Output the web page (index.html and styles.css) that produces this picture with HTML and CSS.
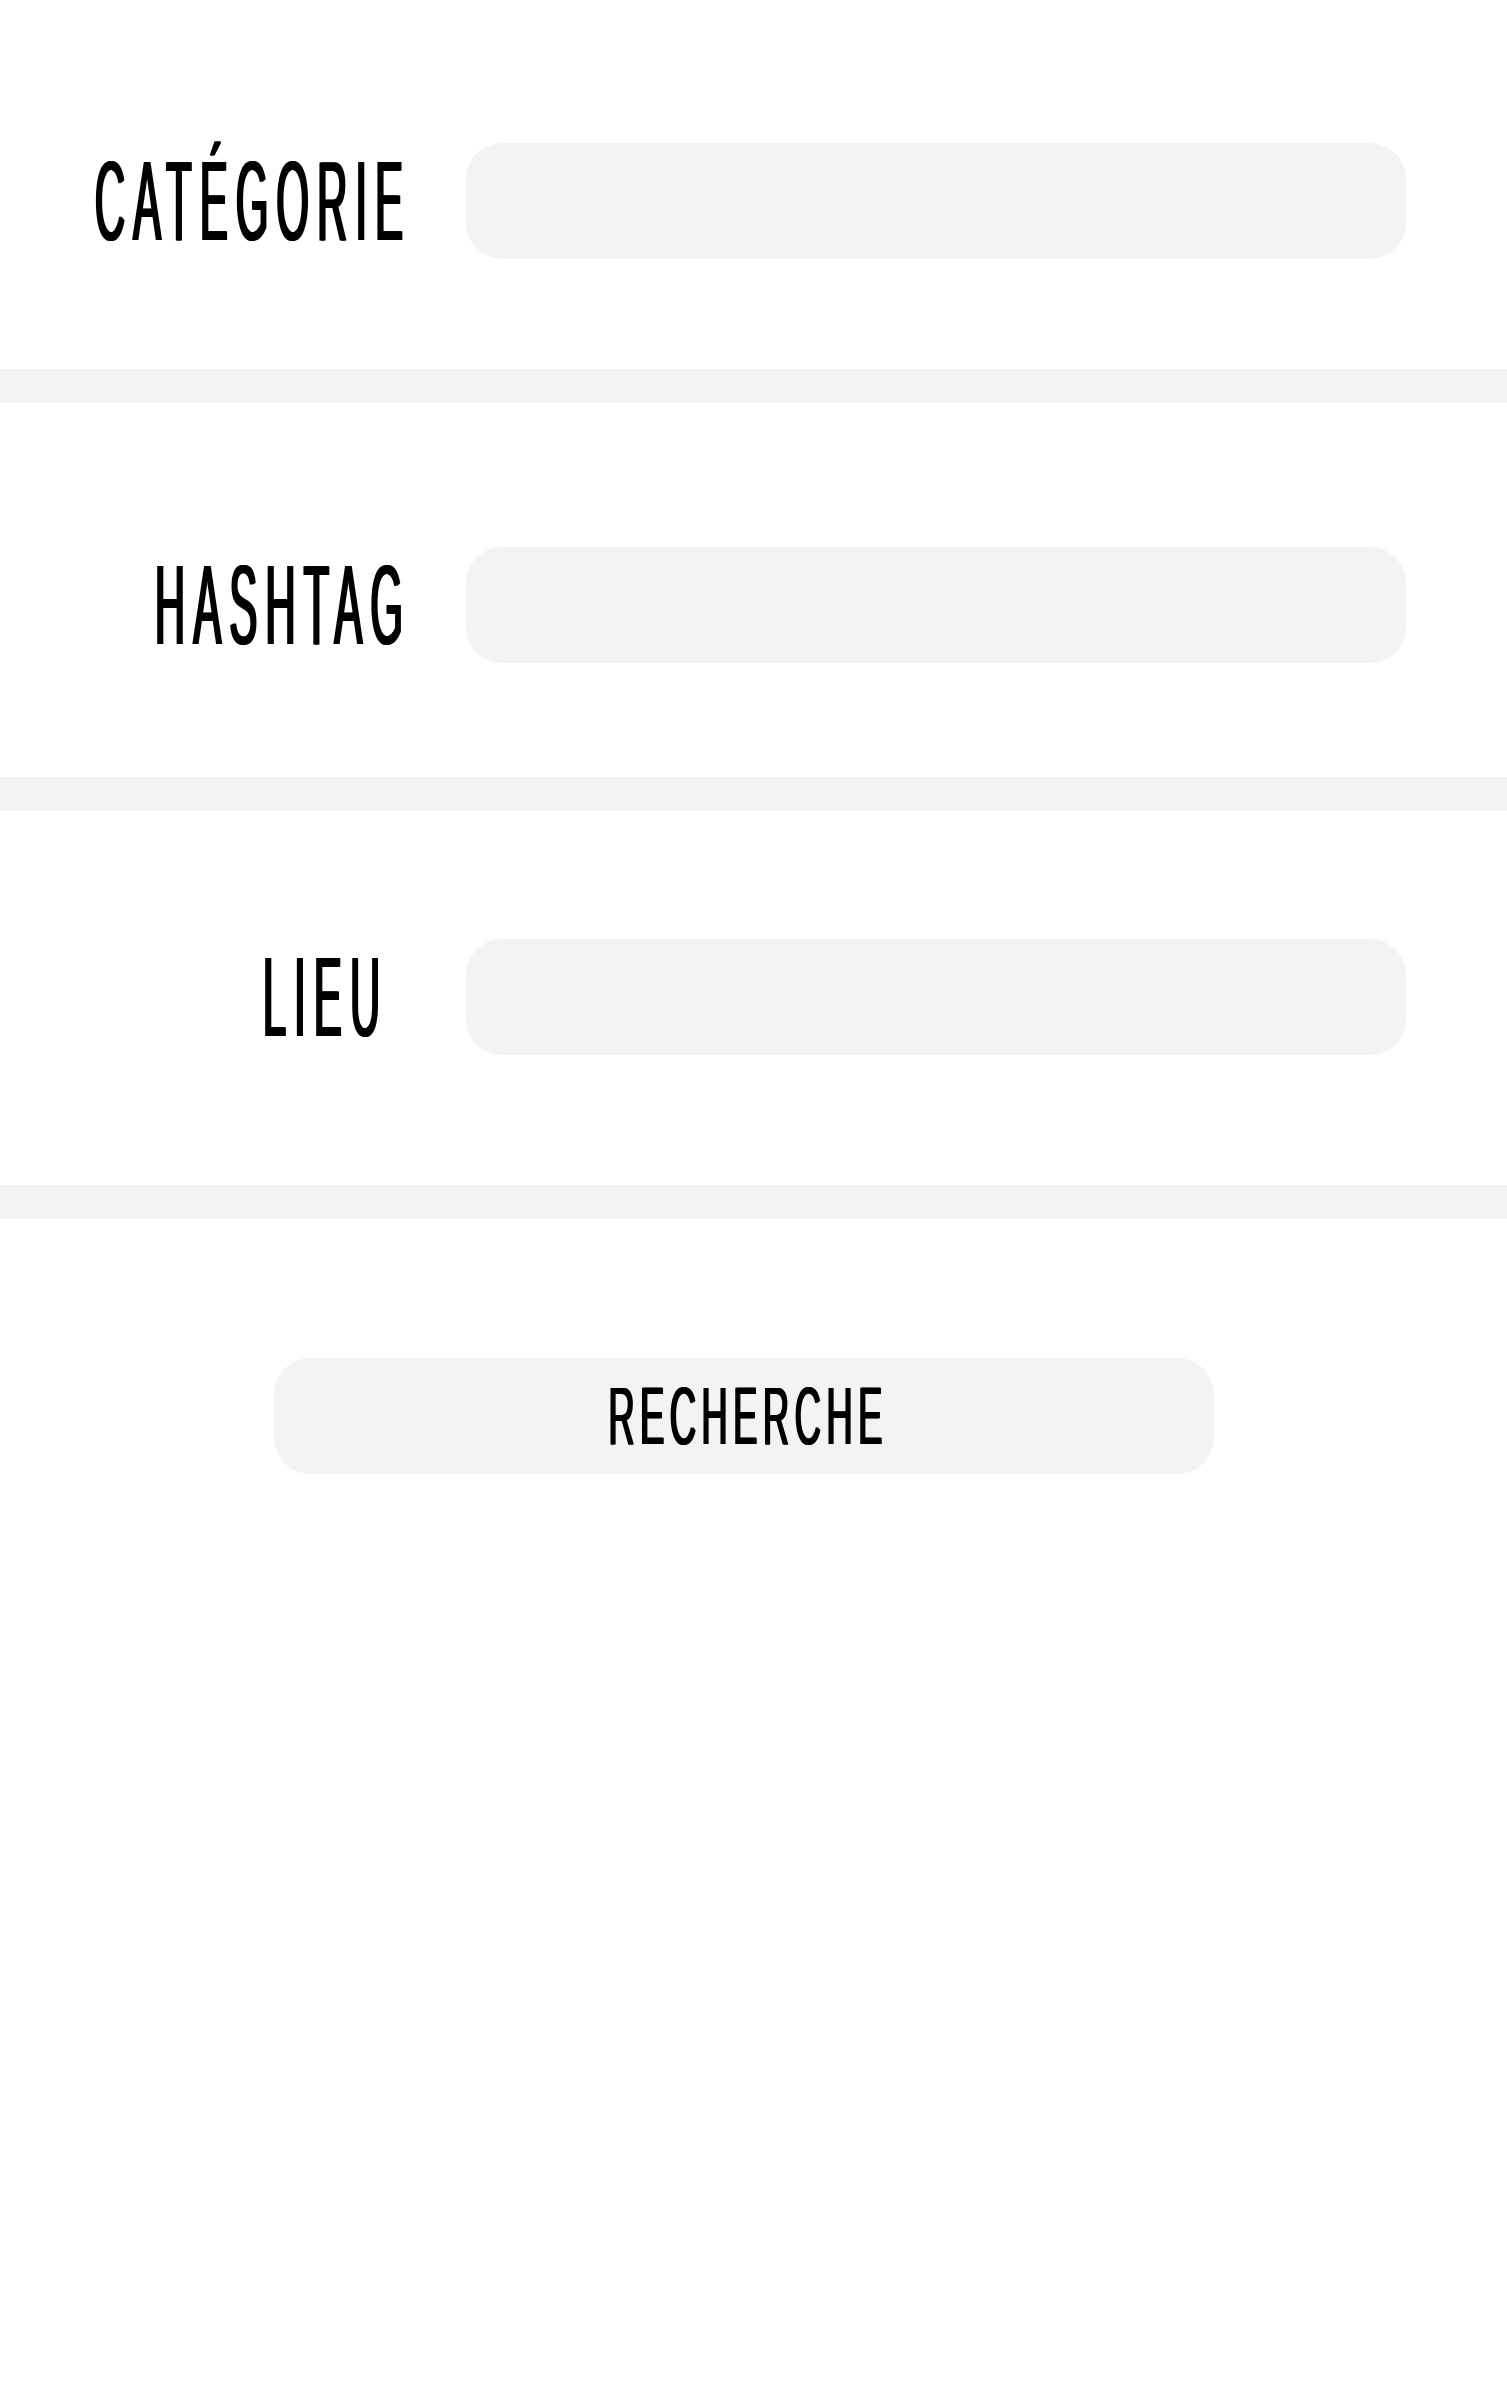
FILE: index.html
```html
<!DOCTYPE html>
<html lang="fr">
<head>
<meta charset="utf-8">
<title>Recherche</title>
<link rel="stylesheet" href="styles.css">
</head>
<body>
<main class="page">
  <section class="field field--first">
    <label class="label" for="categorie"><span class="label-text">CATÉGORIE</span></label>
    <input class="input" id="categorie" type="text">
  </section>
  <div class="divider"></div>
  <section class="field field--second">
    <label class="label" for="hashtag"><span class="label-text">HASHTAG</span></label>
    <input class="input" id="hashtag" type="text">
  </section>
  <div class="divider"></div>
  <section class="field field--third">
    <label class="label label--short" for="lieu"><span class="label-text">LIEU</span></label>
    <input class="input" id="lieu" type="text">
  </section>
  <div class="divider"></div>
  <div class="actions">
    <button class="search-btn" type="button"><span class="btn-text">RECHERCHE</span></button>
  </div>
</main>
</body>
</html>
```

FILE: styles.css
```css
html, body {
  margin: 0;
  padding: 0;
  background: #ffffff;
}

body {
  font-family: "Liberation Sans", Arial, sans-serif;
  color: #000;
  min-height: 2406px;
}

.page {
  display: flex;
  flex-direction: column;
}

.field {
  display: flex;
  align-items: center;
}

.field--first { padding: 143px 0 110px; }
.field--second { padding: 144px 0 114px; }
.field--third { padding: 128px 0 130px; }

.label {
  box-sizing: border-box;
  width: 410px;
  height: 116px;
  flex-shrink: 0;
  margin-right: 56px;
  display: flex;
  align-items: center;
  justify-content: flex-end;
}

.label--short {
  padding-right: 23px;
}

.label-text {
  flex-shrink: 0;
  display: inline-block;
  white-space: nowrap;
  font-size: 113px;
  font-weight: 400;
  line-height: 1;
  letter-spacing: 22px;
  text-shadow: 3px 0 0 #000, 6px 0 0 #000;
  transform: scaleX(0.37);
  transform-origin: right center;
}

.input {
  box-sizing: border-box;
  width: 940px;
  height: 116px;
  flex-shrink: 0;
  border: none;
  outline: none;
  padding: 0 36px;
  border-radius: 36px;
  background: #f3f3f3;
  font: inherit;
}

.divider {
  height: 34px;
  background: #f3f3f3;
}

.actions {
  display: flex;
  padding: 139px 0 0 274px;
}

.search-btn {
  width: 940px;
  height: 116px;
  border: none;
  border-radius: 36px;
  background: #f3f3f3;
  padding: 0;
  margin: 0;
  display: flex;
  align-items: center;
  justify-content: center;
  font: inherit;
  color: #000;
  cursor: pointer;
}

.btn-text {
  flex-shrink: 0;
  display: inline-block;
  white-space: nowrap;
  font-size: 81px;
  font-weight: 400;
  line-height: 1;
  letter-spacing: 12px;
  padding-left: 16px;
  text-shadow: 2px 0 0 #000, 4px 0 0 #000;
  transform: scaleX(0.45);
  transform-origin: center center;
}
```
